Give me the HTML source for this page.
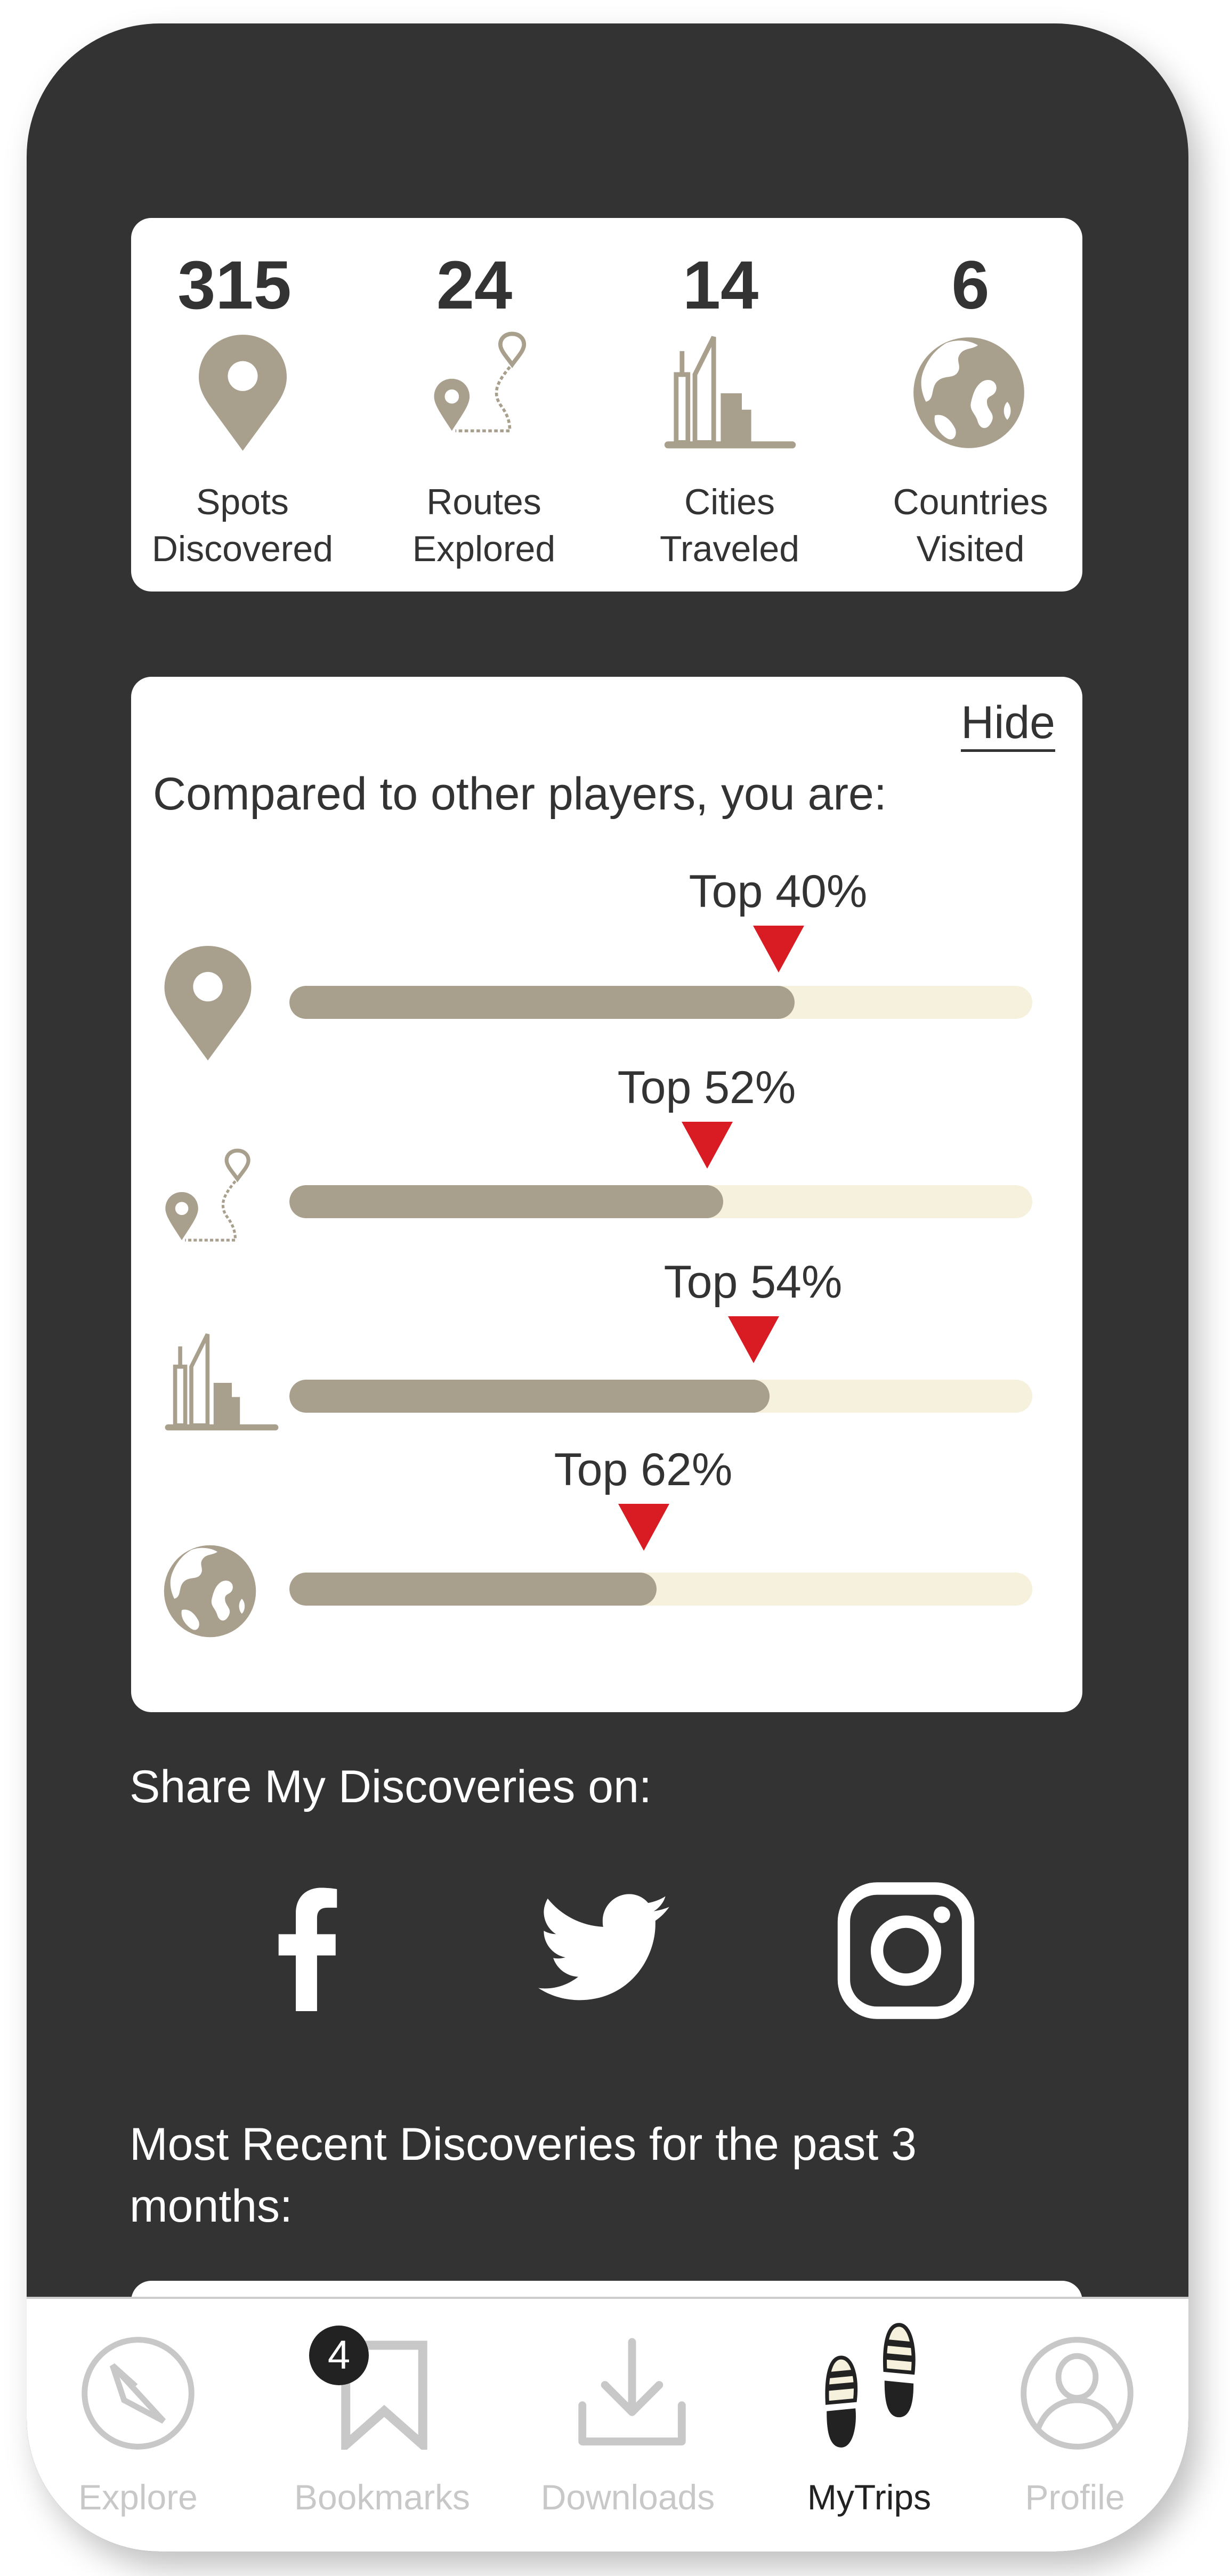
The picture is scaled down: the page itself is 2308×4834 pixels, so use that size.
<!DOCTYPE html>
<html><head><meta charset="utf-8"><style>
*{margin:0;padding:0;box-sizing:border-box}
body{width:2308px;height:4834px;background:#fff;position:relative;overflow:hidden;font-family:"Liberation Sans",sans-serif}
.phone{position:absolute;left:50px;top:44px;width:2180px;height:4744px;background:#333;border-radius:250px;overflow:hidden;box-shadow:20px 30px 60px rgba(0,0,0,.25)}
.abs{position:absolute}
.card{position:absolute;background:#fff;border-radius:38px}
.num{position:absolute;font-weight:bold;font-size:128px;color:#333;text-align:center;width:400px;line-height:1}
.lbl{position:absolute;font-size:68px;color:#333;text-align:center;width:440px;line-height:88px}
.bar{position:absolute;left:543px;width:1394px;height:62px;border-radius:31px;background:#f6f1dc;overflow:hidden}
.bar i{position:absolute;left:0;top:0;bottom:0;background:#a89f8d;border-radius:31px}
.top{position:absolute;font-size:86px;color:#333;line-height:1;transform:translateX(-50%);white-space:nowrap}
.tri{position:absolute;width:0;height:0;border-left:48px solid transparent;border-right:48px solid transparent;border-top:88px solid #d91c24;transform:translateX(-50%)}
.wt{position:absolute;color:#fff;font-size:86px;line-height:116px}
.nav{position:absolute;left:50px;top:4310px;width:2180px;height:478px;background:#fff;border-radius:0 0 250px 250px;border-top:4px solid #ccc}
.nl{position:absolute;top:4648px;font-size:66px;color:#c8c8c8;transform:translateX(-50%);white-space:nowrap}
</style></head><body>
<div class="phone"></div>

<div class="card" style="left:246px;top:409px;width:1785px;height:701px"></div>
<div class="num" style="left:240px;top:472px">315</div>
<div class="num" style="left:690px;top:472px">24</div>
<div class="num" style="left:1152px;top:472px">14</div>
<div class="num" style="left:1621px;top:472px">6</div>

<svg class="abs" style="left:373px;top:628px" width="165" height="218" viewBox="0 0 100 132"><path d="M50 0C22 0 0 21 0 48C0 60 5 70 12 80L50 132L88 80C95 70 100 60 100 48C100 21 78 0 50 0Z" fill="#a89f8d"/><circle cx="50" cy="47" r="17" fill="#fff"/></svg>

<svg class="abs" style="left:810px;top:622px" width="200" height="222" viewBox="0 0 90 100">
<path d="M17 40C8 40 2 47 2 55C2 62 8 70 17 84C26 70 32 62 32 55C32 47 26 40 17 40Z" fill="#a89f8d"/><circle cx="17" cy="55" r="6" fill="#fff"/>
<path d="M68 2C62 2 58 6 58 11C58 16 63 21 68 28C73 21 78 16 78 11C78 6 74 2 68 2Z" fill="none" stroke="#a89f8d" stroke-width="3.5"/>
<path d="M66 30C58 40 50 50 58 62C64 70 66 76 66 84L20 84" fill="none" stroke="#a89f8d" stroke-width="2.5" stroke-dasharray="3 2"/></svg>

<svg class="abs" style="left:1245px;top:628px" width="250" height="220" viewBox="0 0 112 100" fill="#a89f8d">
<rect x="10" y="34" width="10" height="58" fill="none" stroke="#a89f8d" stroke-width="4"/><rect x="13" y="14" width="4" height="22"/>
<path d="M26 92L26 34L42 2L42 92Z" fill="none" stroke="#a89f8d" stroke-width="4"/>
<rect x="48" y="50" width="18" height="44"/><rect x="60" y="64" width="14" height="30"/>
<rect x="0" y="91" width="112" height="6" rx="3"/></svg>

<svg class="abs" style="left:1712px;top:628px" width="212" height="218" viewBox="0 0 100 100"><circle cx="50" cy="50" r="49" fill="#a89f8d"/>
<path d="M30 6C40 2 52 4 58 8C52 12 46 10 42 16C38 22 44 26 40 32C36 38 28 34 22 40C16 46 20 56 12 58C8 50 6 40 10 30C14 20 20 12 30 6Z" fill="#fff"/>
<path d="M62 40C70 36 76 42 74 48C72 54 66 52 66 58C66 66 74 68 70 76C66 84 60 82 58 76C56 68 50 66 52 58C54 50 56 44 62 40Z" fill="#fff"/>
<path d="M20 70C28 68 34 74 38 82C40 88 36 94 30 90C24 86 18 78 20 70Z" fill="#fff"/>
<path d="M84 58C88 62 88 70 84 74C80 70 80 62 84 58Z" fill="#fff"/></svg>

<div class="lbl" style="left:235px;top:898px">Spots<br>Discovered</div>
<div class="lbl" style="left:688px;top:898px">Routes<br>Explored</div>
<div class="lbl" style="left:1149px;top:898px">Cities<br>Traveled</div>
<div class="lbl" style="left:1601px;top:898px">Countries<br>Visited</div>

<div class="card" style="left:246px;top:1270px;width:1785px;height:1943px"></div>
<div class="abs" style="right:328px;top:1306px;font-size:86px;color:#333;line-height:100px;border-bottom:5px solid #333">Hide</div>
<div class="abs" style="left:287px;top:1440px;font-size:86px;color:#333;line-height:100px">Compared to other players, you are:</div>

<div class="top" style="left:1460px;top:1630px">Top 40%</div><div class="tri" style="left:1461px;top:1737px"></div>
<div class="bar" style="top:1850px"><i style="width:948px"></i></div>
<div class="top" style="left:1326px;top:1998px">Top 52%</div><div class="tri" style="left:1327px;top:2105px"></div>
<div class="bar" style="top:2224px"><i style="width:814px"></i></div>
<div class="top" style="left:1413px;top:2363px">Top 54%</div><div class="tri" style="left:1414px;top:2470px"></div>
<div class="bar" style="top:2589px"><i style="width:901px"></i></div>
<div class="top" style="left:1207px;top:2715px">Top 62%</div><div class="tri" style="left:1208px;top:2822px"></div>
<div class="bar" style="top:2951px"><i style="width:689px"></i></div>

<svg class="abs" style="left:306px;top:1775px" width="168" height="215" viewBox="0 0 100 132"><path d="M50 0C22 0 0 21 0 48C0 60 5 70 12 80L50 132L88 80C95 70 100 60 100 48C100 21 78 0 50 0Z" fill="#a89f8d"/><circle cx="50" cy="47" r="17" fill="#fff"/></svg>
<svg class="abs" style="left:306px;top:2155px" width="185" height="205" viewBox="0 0 90 100">
<path d="M17 40C8 40 2 47 2 55C2 62 8 70 17 84C26 70 32 62 32 55C32 47 26 40 17 40Z" fill="#a89f8d"/><circle cx="17" cy="55" r="6" fill="#fff"/>
<path d="M68 2C62 2 58 6 58 11C58 16 63 21 68 28C73 21 78 16 78 11C78 6 74 2 68 2Z" fill="none" stroke="#a89f8d" stroke-width="3.5"/>
<path d="M66 30C58 40 50 50 58 62C64 70 66 76 66 84L20 84" fill="none" stroke="#a89f8d" stroke-width="2.5" stroke-dasharray="3 2"/></svg>
<svg class="abs" style="left:306px;top:2500px" width="220" height="190" viewBox="0 0 112 100" fill="#a89f8d">
<rect x="10" y="34" width="10" height="58" fill="none" stroke="#a89f8d" stroke-width="4"/><rect x="13" y="14" width="4" height="22"/>
<path d="M26 92L26 34L42 2L42 92Z" fill="none" stroke="#a89f8d" stroke-width="4"/>
<rect x="48" y="50" width="18" height="44"/><rect x="60" y="64" width="14" height="30"/>
<rect x="0" y="91" width="112" height="6" rx="3"/></svg>
<svg class="abs" style="left:306px;top:2898px" width="176" height="176" viewBox="0 0 100 100"><circle cx="50" cy="50" r="49" fill="#a89f8d"/>
<path d="M30 6C40 2 52 4 58 8C52 12 46 10 42 16C38 22 44 26 40 32C36 38 28 34 22 40C16 46 20 56 12 58C8 50 6 40 10 30C14 20 20 12 30 6Z" fill="#fff"/>
<path d="M62 40C70 36 76 42 74 48C72 54 66 52 66 58C66 66 74 68 70 76C66 84 60 82 58 76C56 68 50 66 52 58C54 50 56 44 62 40Z" fill="#fff"/>
<path d="M20 70C28 68 34 74 38 82C40 88 36 94 30 90C24 86 18 78 20 70Z" fill="#fff"/>
<path d="M84 58C88 62 88 70 84 74C80 70 80 62 84 58Z" fill="#fff"/></svg>

<div class="wt" style="left:243px;top:3295px">Share My Discoveries on:</div>

<svg class="abs" style="left:515px;top:3540px" width="125" height="234" viewBox="0 0 50 94"><path d="M32 94V52H46V36H32V24C32 19 34 16 40 16H47V2C44 1.5 40 1 35 1C24 1 16 8 16 20V36H3V52H16V94Z" fill="#fff"/></svg>
<svg class="abs" style="left:1010px;top:3550px" width="250" height="215" viewBox="0 0 24 20"><path d="M23.6 2.4c-.9.4-1.8.6-2.8.8 1-.6 1.800-1.600 2.100-2.700-.9.6-2 1-3.1 1.2C19 .7 17.7.1 16.4.1c-2.7 0-4.8 2.2-4.8 4.8 0 .4 0 .8.1 1.1C7.7 5.8 4.1 3.9 1.7.9c-.4.7-.7 1.6-.7 2.4 0 1.7.9 3.2 2.2 4-.8 0-1.5-.2-2.2-.6v.1c0 2.3 1.7 4.3 3.900 4.700-.4.1-.8.2-1.3.2-.3 0-.6 0-.9-.1.6 1.9 2.4 3.3 4.5 3.4-1.7 1.3-3.7 2.1-6 2.1-.4 0-.8 0-1.2-.1 2.1 1.4 4.7 2.2 7.4 2.2 8.9 0 13.7-7.4 13.7-13.7v-.6c1-.7 1.8-1.5 2.5-2.5z" fill="#fff"/></svg>
<svg class="abs" style="left:1569px;top:3531px" width="262" height="259" viewBox="0 0 100 100"><rect x="5" y="5" width="90" height="90" rx="24" fill="none" stroke="#fff" stroke-width="9"/><circle cx="50" cy="50" r="21" fill="none" stroke="#fff" stroke-width="9"/><circle cx="76" cy="24" r="6" fill="#fff"/></svg>

<div class="wt" style="left:243px;top:3966px">Most Recent Discoveries for the past 3<br>months:</div>

<div class="card" style="left:246px;top:4280px;width:1785px;height:200px"></div>

<div class="nav"></div>
<svg class="abs" style="left:150px;top:4382px" width="218" height="218" viewBox="0 0 100 100" fill="none" stroke="#c8c8c8" stroke-width="5"><circle cx="50" cy="50" r="46"/><path d="M28 26L72 74L38 56Z M28 26L48 44"/></svg>
<svg class="abs" style="left:636px;top:4392px" width="170" height="205" viewBox="0 0 80 96" fill="none" stroke="#c8c8c8" stroke-width="8"><path d="M6 4H74V92L40 62L6 92Z"/></svg>
<div class="abs" style="left:580px;top:4364px;width:112px;height:112px;border-radius:56px;background:#222;color:#fff;font-size:76px;text-align:center;line-height:112px">4</div>
<svg class="abs" style="left:1080px;top:4385px" width="212" height="215" viewBox="0 0 100 100" fill="none" stroke="#c8c8c8" stroke-width="7" stroke-linecap="round" stroke-linejoin="round"><path d="M50 4V64M26 42L50 66L74 42"/><path d="M6 60V92H94V60"/></svg>
<svg class="abs" style="left:1544px;top:4358px" width="182" height="236" viewBox="0 0 76 100" stroke="#222" stroke-width="3">
<path d="M14 28C5 28 2 44 3 64L25 62C27 44 23 28 14 28Z" fill="#f6f1dc"/>
<path d="M4 42L25 40M3 52L25 50" stroke-width="5"/>
<path d="M4 72L24 70C25 82 22 98 14 98C6 98 4 86 4 72Z" fill="#222"/>
<path d="M60 2C51 2 48 18 49 38L71 40C73 20 69 2 60 2Z" fill="#f6f1dc"/>
<path d="M50 16L71 18M49 27L71 29" stroke-width="5"/>
<path d="M50 48L70 50C70 62 68 74 60 74C52 74 50 62 50 48Z" fill="#222"/></svg>
<svg class="abs" style="left:1912px;top:4382px" width="218" height="218" viewBox="0 0 100 100" fill="none" stroke="#c8c8c8" stroke-width="5"><circle cx="50" cy="50" r="46"/><ellipse cx="50" cy="36" rx="16" ry="18"/><path d="M16 82C22 64 36 56 50 56C64 56 78 64 84 82"/></svg>

<div class="nl" style="left:259px">Explore</div>
<div class="nl" style="left:717px">Bookmarks</div>
<div class="nl" style="left:1178px">Downloads</div>
<div class="nl" style="left:1631px;color:#222">MyTrips</div>
<div class="nl" style="left:2017px">Profile</div>
</body></html>
